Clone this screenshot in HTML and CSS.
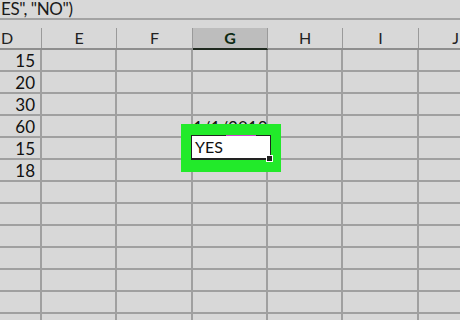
FILE: index.html
```html
<!DOCTYPE html>
<html>
<head>
<meta charset="utf-8">
<link rel="stylesheet" href="styles.css">
</head>
<body>
<div class="sheet">
  <div class="formula">ES", "NO")</div>
  <div class="headers">
    <div class="hcell first">D</div>
    <div class="hcell">E</div>
    <div class="hcell">F</div>
    <div class="hcell sel">G</div>
    <div class="hcell">H</div>
    <div class="hcell">I</div>
    <div class="hcell last">J</div>
  </div>
  <div class="grid">
    <div class="c num">15</div><div class="c"></div><div class="c"></div><div class="c"></div><div class="c"></div><div class="c"></div><div class="c"></div>
    <div class="c num">20</div><div class="c"></div><div class="c"></div><div class="c"></div><div class="c"></div><div class="c"></div><div class="c"></div>
    <div class="c num">30</div><div class="c"></div><div class="c"></div><div class="c"></div><div class="c"></div><div class="c"></div><div class="c"></div>
    <div class="c num">60</div><div class="c"></div><div class="c"></div><div class="c date">1/1/2018</div><div class="c"></div><div class="c"></div><div class="c"></div>
    <div class="c num">15</div><div class="c"></div><div class="c"></div><div class="c"></div><div class="c"></div><div class="c"></div><div class="c"></div>
    <div class="c num">18</div><div class="c"></div><div class="c"></div><div class="c"></div><div class="c"></div><div class="c"></div><div class="c"></div>
    <div class="c"></div><div class="c"></div><div class="c"></div><div class="c"></div><div class="c"></div><div class="c"></div><div class="c"></div>
    <div class="c"></div><div class="c"></div><div class="c"></div><div class="c"></div><div class="c"></div><div class="c"></div><div class="c"></div>
    <div class="c"></div><div class="c"></div><div class="c"></div><div class="c"></div><div class="c"></div><div class="c"></div><div class="c"></div>
    <div class="c"></div><div class="c"></div><div class="c"></div><div class="c"></div><div class="c"></div><div class="c"></div><div class="c"></div>
    <div class="c"></div><div class="c"></div><div class="c"></div><div class="c"></div><div class="c"></div><div class="c"></div><div class="c"></div>
    <div class="c"></div><div class="c"></div><div class="c"></div><div class="c"></div><div class="c"></div><div class="c"></div><div class="c"></div>
    <div class="c"></div><div class="c"></div><div class="c"></div><div class="c"></div><div class="c"></div><div class="c"></div><div class="c"></div>
  </div>
  <div class="highlight">
    <div class="editbox">
      <span class="pink"></span>
      <span class="yes">YES</span>
      <span class="handle"></span>
    </div>
  </div>
</div>
</body>
</html>
```
FILE: styles.css
```css
html, body {
  margin: 0;
  padding: 0;
  background: #d8d8d8;
}
.sheet {
  position: relative;
  width: 460px;
  height: 320px;
  overflow: hidden;
  background: #d8d8d8;
  font-family: Lato, "Open Sans", sans-serif;
  color: #111;
}
.formula {
  height: 18px;
  font-size: 17px;
  line-height: 18px;
  padding-left: 1px;
  letter-spacing: -0.4px;
  border-bottom: 2px solid #a3a3a3;
  color: #1a1a1a;
  white-space: nowrap;
}
.headers {
  display: grid;
  grid-template-columns: 42px 75px 76px 75px 75px 76px 1fr;
  height: 30px;
  padding-top: 8px;
  box-sizing: border-box;
  border-bottom: 2px solid #8e8e8e;
}
.hcell {
  border-right: 1px solid #9a9a9a;
  font-size: 16px;
  line-height: 20px;
  text-align: center;
  color: #222;
}
.hcell.first {
  text-align: left;
  padding-left: 1px;
}
.hcell.last {
  border-right: none;
  text-align: right;
  padding-right: 1px;
}
.hcell.sel {
  background: #bdbdbd;
  border-bottom: 2px solid #1f2a1f;
  margin-bottom: -2px;
  font-weight: bold;
  color: #0d2a12;
}
.grid {
  display: grid;
  grid-template-columns: 42px 75px 76px 75px 75px 76px 1fr;
  grid-auto-rows: 22px;
}
.c {
  border-right: 2px solid #a0a0a0;
  border-bottom: 2px solid #a0a0a0;
  box-sizing: border-box;
  font-size: 17px;
  line-height: 22px;
}
.c:nth-child(7n) {
  border-right: none;
}
.num {
  text-align: right;
  padding-right: 5px;
}
.date {
  text-align: right;
  padding-right: 4px;
  white-space: nowrap;
  line-height: 24px;
}
.highlight {
  position: absolute;
  left: 181px;
  top: 124px;
  width: 100px;
  height: 48px;
  background: #22ea2a;
  box-sizing: border-box;
  padding: 11px 10px 12px 10px;
}
.editbox {
  position: relative;
  height: 100%;
  background: #fff;
  border: 1px solid #222;
  border-bottom-width: 2px;
  box-sizing: border-box;
}
.yes {
  display: block;
  font-size: 16px;
  line-height: 22px;
  padding-left: 3px;
  color: #111;
}
.pink {
  position: absolute;
  left: 34px;
  top: -1px;
  width: 30px;
  height: 1px;
  background: #d040d0;
}
.handle {
  position: absolute;
  right: -3px;
  bottom: -4px;
  width: 5px;
  height: 5px;
  background: #222;
  border: 1px solid #fff;
}
```
